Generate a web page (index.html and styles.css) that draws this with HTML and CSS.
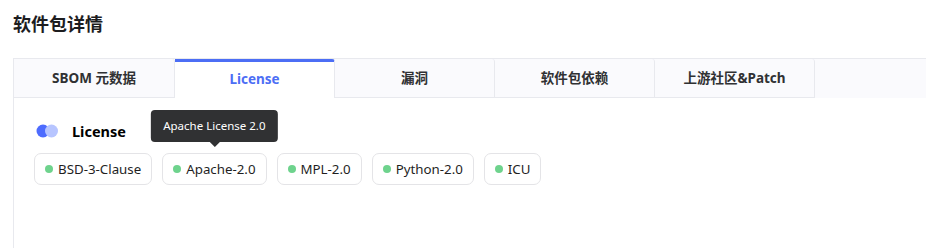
FILE: index.html
```html
<!DOCTYPE html>
<html>
<head>
    <title>软件包详情</title>
    <link rel="stylesheet" href="styles.css">
</head>
<body>
    <h1 class="page-title">软件包详情</h1>

    <div class="panel">
        <div class="tabs">
            <div class="tab">SBOM 元数据</div>
            <div class="tab active">License</div>
            <div class="tab">漏洞</div>
            <div class="tab">软件包依赖</div>
            <div class="tab">上游社区&amp;Patch</div>
        </div>

        <div class="content">
            <div class="section-title">
                <svg class="section-icon" width="24" height="14" viewBox="0 0 24 14">
                    <circle cx="7" cy="7" r="6.5" fill="#4d6bfe"/>
                    <circle cx="15.5" cy="7" r="6.5" fill="#b7c5ff"/>
                </svg>
                <span>License</span>
            </div>

            <div class="tags">
                <span class="tag"><i class="dot"></i>BSD-3-Clause</span>
                <span class="tag">
                    <i class="dot"></i>Apache-2.0
                    <span class="tooltip">Apache License 2.0</span>
                </span>
                <span class="tag"><i class="dot"></i>MPL-2.0</span>
                <span class="tag"><i class="dot"></i>Python-2.0</span>
                <span class="tag"><i class="dot"></i>ICU</span>
            </div>
        </div>
    </div>
</body>
</html>
```

FILE: styles.css
```css
body {
    font-family: "Noto Sans", "Noto Sans CJK SC", sans-serif;
    margin: 0;
    padding: 12px 0 0 13px;
    background-color: #ffffff;
    color: #303133;
    height: 236px;
    overflow: hidden;
}

.page-title {
    font-size: 18px;
    line-height: 24px;
    margin: 0 0 22px 0;
    color: #1d1d1f;
}

.panel {
    border-top: 1px solid #e8e9ee;
    border-left: 1px solid #e8e9ee;
    height: 200px;
}

.tabs {
    display: flex;
    background-color: #fafafd;
    height: 39px;
    padding-left: 1px;
}

.tab {
    box-sizing: border-box;
    width: 160px;
    height: 39px;
    line-height: 39px;
    text-align: center;
    font-size: 13.5px;
    font-weight: bold;
    color: #303133;
    border-right: 1px solid #e8e9ee;
    border-bottom: 1px solid #e8e9ee;
    border-top-right-radius: 3px;
}

.tab:first-child {
    margin-left: -1px;
    width: 161px;
}

.tab.active {
    color: #4c6ef5;
    background-color: #ffffff;
    border-top: 3px solid #4c6ef5;
    border-bottom: none;
    line-height: 35px;
}

.content {
    padding: 22px 20px 0 20px;
}

.section-title {
    display: flex;
    align-items: center;
    gap: 12px;
    height: 22px;
    font-size: 14.5px;
    font-weight: bold;
    color: #000000;
    margin-bottom: 11px;
}

.section-icon {
    margin-left: 2px;
}

.tags {
    display: flex;
    gap: 10px;
}

.tag {
    position: relative;
    display: flex;
    align-items: center;
    box-sizing: border-box;
    height: 32px;
    padding: 0 10px;
    border: 1px solid #e4e4e7;
    border-radius: 7px;
    font-size: 13.3px;
    color: #1f1f1f;
}

.dot {
    width: 8px;
    height: 8px;
    border-radius: 50%;
    background-color: #6ed38d;
    margin-right: 5px;
}

.tooltip {
    position: absolute;
    left: 50%;
    bottom: calc(100% + 12px);
    transform: translateX(-50%);
    white-space: nowrap;
    background-color: #303133;
    color: #ffffff;
    font-size: 11.5px;
    line-height: 32px;
    padding: 0 12px;
    border-radius: 4px;
}

.tooltip::after {
    content: "";
    position: absolute;
    left: 50%;
    top: 100%;
    margin-left: -5px;
    border: 5px solid transparent;
    border-top-color: #303133;
    border-bottom: none;
}
```
